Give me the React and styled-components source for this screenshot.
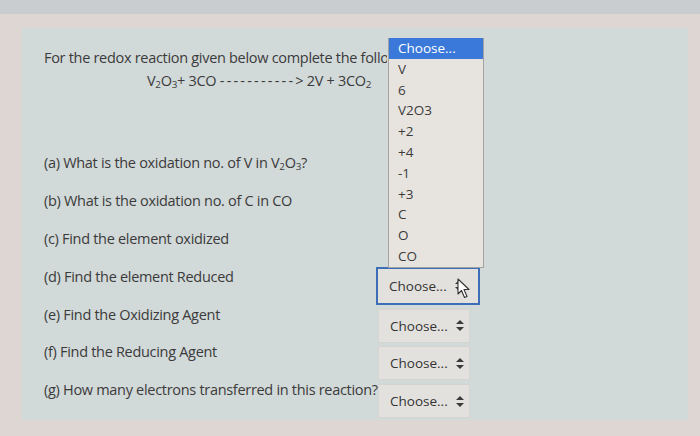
import React from 'react'
import styled, { createGlobalStyle } from 'styled-components'

const GlobalStyle = createGlobalStyle`
  html, body {
    margin: 0;
    padding: 0;
  }
  body {
    width: 700px;
    height: 436px;
    overflow: hidden;
    background: linear-gradient(#c9cdd0 0 14px, #ddd6d3 14px);
    font-family: "Open Sans", "Noto Sans", sans-serif;
    color: #3b3b3b;
  }
`

const questions = [
  { label: '(a) What is the oxidation no. of V in ', chem: true },
  { label: '(b) What is the oxidation no. of C in CO' },
  { label: '(c) Find the element oxidized' },
  { label: '(d) Find the element Reduced', select: 'focus' },
  { label: '(e) Find the Oxidizing Agent', select: 'plain' },
  { label: '(f)  Find the Reducing Agent', select: 'plain' },
  { label: '(g) How many electrons transferred in this reaction?', select: 'plain' },
]

const options = ['V', '6', 'V2O3', '+2', '+4', '-1', '+3', 'C', 'O', 'CO']

const Arrows = () => (
  <svg width="8" height="11" viewBox="0 0 8 11">
    <path d="M4 0 L8 4 L0 4 Z" fill="#3a3a3a" />
    <path d="M0 7 L8 7 L4 11 Z" fill="#3a3a3a" />
  </svg>
)

const Pointer = () => (
  <svg width="16" height="22" viewBox="0 0 16 22">
    <path
      d="M1 1 L1 16 L4.5 12.5 L7.5 19.5 L10 18.5 L7 11.5 L12 11.5 Z"
      fill="#fff"
      stroke="#333"
      strokeWidth="1.1"
      strokeLinejoin="round"
    />
  </svg>
)

const App = () => {
  return (
    <>
      <GlobalStyle />
      <Page>
        <Panel>
          <Intro>For the redox reaction given below complete the following</Intro>
          <Equation>
            V<sub>2</sub>O<sub>3</sub>+ 3CO <Dashes>-----------</Dashes>&gt; 2V + 3CO<sub>2</sub>
          </Equation>
          <QuestionGrid>
            {questions.map((q) => (
              <Row key={q.label}>
                <Question>
                  {q.label}
                  {q.chem && (
                    <>
                      V<sub>2</sub>O<sub>3</sub>?
                    </>
                  )}
                </Question>
                {q.select && (
                  <Select $focus={q.select === 'focus'}>
                    <span>Choose...</span>
                    <Arrows />
                    {q.select === 'focus' && (
                      <Cursor>
                        <Pointer />
                      </Cursor>
                    )}
                  </Select>
                )}
              </Row>
            ))}
          </QuestionGrid>
          <OpenList>
            <Option $active>Choose...</Option>
            {options.map((o) => (
              <Option key={o}>{o}</Option>
            ))}
          </OpenList>
        </Panel>
      </Page>
    </>
  )
}

const Page = styled.div`
  padding: 28px 12px 0 22px;
`

const Panel = styled.div`
  position: relative;
  width: 666px;
  height: 392px;
  box-sizing: border-box;
  background: #d2d9d9;
  padding: 20px 0 0 22px;
  overflow: hidden;
  sub {
    font-size: 0.68em;
    vertical-align: -0.25em;
    line-height: 0;
  }
`

const Intro = styled.div`
  width: 343px;
  overflow: hidden;
  font-size: 14.5px;
  letter-spacing: -0.3px;
  line-height: 20px;
  white-space: nowrap;
`

const Equation = styled.div`
  font-size: 14.5px;
  letter-spacing: -0.3px;
  line-height: 20px;
  margin: 3px 0 0 103px;
  white-space: nowrap;
`

const Dashes = styled.span`
  letter-spacing: 2.2px;
`

const QuestionGrid = styled.div`
  margin-top: 53px;
  display: grid;
  grid-auto-rows: 37.9px;
`

const Row = styled.div`
  display: grid;
  grid-template-columns: 334px auto;
  align-items: start;
`

const Question = styled.div`
  font-size: 14.5px;
  letter-spacing: -0.3px;
  line-height: 38px;
  white-space: nowrap;
`

const Select = styled.div`
  position: relative;
  display: flex;
  align-items: center;
  gap: 8px;
  box-sizing: border-box;
  height: ${(p) => (p.$focus ? '38px' : '34px')};
  width: ${(p) => (p.$focus ? '104px' : '92px')};
  margin: ${(p) => (p.$focus ? '9px 0 0 -2px' : '13px 0 0 0')};
  padding-left: 11px;
  background: #e3e1dd;
  border: ${(p) => (p.$focus ? '2px solid #3d6fb8' : '1px solid #d6d4d0')};
  font-size: 13.5px;
  color: #333;
`

const Cursor = styled.div`
  position: absolute;
  left: 79px;
  top: 9px;
`

const OpenList = styled.div`
  position: absolute;
  left: 366px;
  top: 10px;
  width: 96px;
  box-sizing: border-box;
  background: #e7e4e0;
  border: 1px solid #a3a3a3;
  border-top: none;
`

const Option = styled.div`
  height: 20.8px;
  line-height: 20.8px;
  padding-left: 9px;
  font-size: 13.5px;
  background: ${(p) => (p.$active ? '#3a79d9' : 'transparent')};
  color: ${(p) => (p.$active ? '#fff' : '#3b3b3b')};
`

export default App
